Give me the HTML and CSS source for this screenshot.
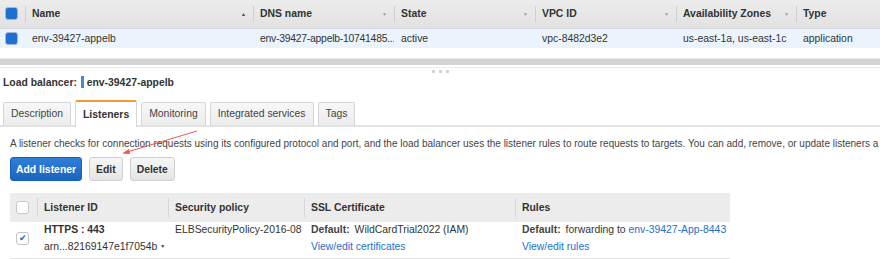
FILE: index.html
```html
<!DOCTYPE html>
<html lang="en">
<head>
  <meta charset="UTF-8">
  <title>Load balancers</title>
  <link rel="stylesheet" href="styles.css">
</head>
<body>
  <table class="lb-table">
    <thead>
      <tr>
        <th class="col-check"><span class="box box-blue"></span></th>
        <th class="col-name">Name<span class="sort up">&#9650;</span></th>
        <th class="col-dns">DNS name<span class="sort">&#9660;</span></th>
        <th class="col-state">State<span class="sort">&#9660;</span></th>
        <th class="col-vpc">VPC ID<span class="sort">&#9660;</span></th>
        <th class="col-az">Availability Zones<span class="sort">&#9660;</span></th>
        <th class="col-type">Type</th>
      </tr>
    </thead>
    <tbody>
      <tr class="selected">
        <td class="col-check"><span class="box box-blue"></span></td>
        <td>env-39427-appelb</td>
        <td class="dns">env-39427-appelb-10741485...</td>
        <td>active</td>
        <td>vpc-8482d3e2</td>
        <td>us-east-1a, us-east-1c</td>
        <td>application</td>
      </tr>
    </tbody>
  </table>

  <div class="splitter">
    <div class="split-bar"></div>
    <div class="split-dots"><i></i><i></i><i></i></div>
  </div>

  <div class="details">
    <div class="lb-title">Load balancer: <span class="marker"></span> env-39427-appelb</div>

    <div class="tabs">
      <div class="tab">Description</div>
      <div class="tab active">Listeners</div>
      <div class="tab">Monitoring</div>
      <div class="tab">Integrated services</div>
      <div class="tab">Tags</div>
    </div>

    <p class="intro">A listener checks for connection requests using its configured protocol and port, and the load balancer uses the listener rules to route requests to targets. You can add, remove, or update listeners a</p>

    <div class="actions">
      <button class="btn btn-primary">Add listener</button>
      <button class="btn">Edit</button>
      <button class="btn">Delete</button>
    </div>

    <table class="listeners">
      <thead>
        <tr>
          <th class="l-check"><span class="box"></span></th>
          <th class="l-id">Listener ID</th>
          <th class="l-policy">Security policy</th>
          <th class="l-cert">SSL Certificate</th>
          <th class="l-rules">Rules</th>
        </tr>
      </thead>
      <tbody>
        <tr>
          <td class="l-check"><span class="box checked">&#10004;</span></td>
          <td>
            <div class="strong">HTTPS : 443</div>
            <div class="sub">arn...82169147e1f7054b <span class="caret">&#9660;</span></div>
          </td>
          <td>ELBSecurityPolicy-2016-08</td>
          <td>
            <div><span class="label">Default:</span> WildCardTrial2022 (IAM)</div>
            <div class="sub"><a href="#">View/edit certificates</a></div>
          </td>
          <td>
            <div><span class="label">Default:</span> forwarding to <a href="#">env-39427-App-8443</a></div>
            <div class="sub"><a href="#">View/edit rules</a></div>
          </td>
        </tr>
      </tbody>
    </table>

    <svg class="arrow" width="90" height="30" viewBox="0 0 90 30">
      <line x1="84" y1="2" x2="14" y2="23" stroke="#f0564e" stroke-width="1"/>
      <polygon points="9,24.5 16,20 17,25" fill="#f0564e"/>
    </svg>
  </div>
</body>
</html>
```

FILE: styles.css
```css
* {
  margin: 0;
  padding: 0;
  box-sizing: border-box;
}

body {
  font-family: "Liberation Sans", Arial, sans-serif;
  font-size: 10.4px;
  color: #333;
  background-color: white;
  width: 880px;
  height: 259px;
  overflow: hidden;
}

table {
  border-collapse: collapse;
  table-layout: fixed;
}

/* top load balancer list */
.lb-table {
  width: 880px;
}

.lb-table th {
  height: 28px;
  text-align: left;
  font-weight: bold;
  color: #333;
  background: linear-gradient(#ececec, #e2e2e2);
  border-bottom: 1px solid #d6d6d6;
  padding-left: 7px;
  position: relative;
}

.lb-table th + th::before {
  content: "";
  position: absolute;
  left: 0;
  top: 6px;
  bottom: 6px;
  border-left: 1px solid #cfcfcf;
}

.lb-table td {
  height: 20px;
  padding-left: 7px;
  white-space: nowrap;
  overflow: hidden;
}

.lb-table td.dns {
  letter-spacing: -0.25px;
  padding-right: 0;
}

.selected td {
  background-color: #ebf3fc;
}

.col-check { width: 25px; }
.col-name { width: 228px; }
.col-dns { width: 141px; }
.col-state { width: 141px; }
.col-vpc { width: 141px; }
.col-az { width: 120px; }

.lb-table .col-check {
  padding-left: 5px;
}

.sort {
  float: right;
  margin-right: 7px;
  font-size: 5px;
  color: #a0a0a0;
  line-height: 12px;
}

.sort.up {
  color: #444;
}

.box {
  display: inline-block;
  width: 13px;
  height: 13px;
  border-radius: 3px;
  border: 1px solid #c8c8c8;
  background-color: white;
  vertical-align: middle;
  text-align: center;
  font-size: 9px;
  line-height: 11px;
}

.box-blue {
  background-color: #1f6fd0;
  border-color: #9fb7d8;
}

.checked {
  color: #1a66c9;
  border-color: #c4c4c4;
}

/* splitter */
.splitter {
  height: 28px;
  padding-top: 10px;
}

.split-bar {
  height: 7px;
  background-color: #d4d4d4;
  border-top: 1px solid #e8e8e8;
}

.split-dots {
  border-top: 1px solid #ececec;
  margin-top: 2px;
  display: flex;
  justify-content: center;
  gap: 4px;
  padding-top: 2px;
}

.split-dots i {
  width: 3px;
  height: 3px;
  background-color: #d0d0d0;
  border-radius: 1px;
}

/* details pane */
.details {
  position: relative;
}

.lb-title {
  font-weight: bold;
  padding-left: 3px;
  color: #333;
  height: 24px;
  line-height: 13px;
}

.marker {
  display: inline-block;
  width: 3px;
  height: 12px;
  background-color: #3c8be0;
  vertical-align: -2px;
  margin-left: 1px;
}

.tabs {
  display: flex;
  gap: 4px;
  padding-left: 3px;
  border-bottom: 2px solid #e2e2e2;
  height: 27px;
  align-items: flex-end;
}

.tab {
  height: 23px;
  padding: 0 7px;
  line-height: 22px;
  color: #444;
  background: linear-gradient(#f7f7f7, #ececec);
  border: 1px solid #d6d6d6;
  border-bottom: none;
  border-radius: 2px 2px 0 0;
}

.tab.active {
  height: 27px;
  line-height: 25px;
  background: white;
  font-weight: bold;
  color: #333;
  border-top: 2px solid #f2993a;
  margin-bottom: -2px;
}

.intro {
  padding: 10px 0 0 10px;
  font-size: 10px;
  line-height: 13px;
  white-space: nowrap;
  color: #444;
  height: 30px;
}

.actions {
  display: flex;
  gap: 7px;
  padding-left: 10px;
  height: 36px;
}

.btn {
  font-family: "Liberation Sans", Arial, sans-serif;
  font-size: 10.4px;
  font-weight: bold;
  height: 24px;
  padding: 0 5px;
  color: #333;
  background: linear-gradient(#f6f6f6, #e4e4e4);
  border: 1px solid #cfcfcf;
  border-radius: 3px;
}

.btn + .btn {
  padding: 0 6px;
}

.btn-primary {
  color: white;
  background: linear-gradient(#2f7fd8, #1b63c0);
  border-color: #1a5fb4;
}

/* listeners table */
.listeners {
  width: 720px;
  margin-left: 10px;
}

.listeners th {
  height: 29px;
  text-align: left;
  font-weight: bold;
  color: #333;
  background-color: #ececec;
  padding-left: 7px;
  position: relative;
}

.listeners th + th::before {
  content: "";
  position: absolute;
  left: 0;
  top: 5px;
  bottom: 5px;
  border-left: 1px solid #d6d6d6;
}

.listeners td {
  padding: 1px 0 5px 7px;
  vertical-align: top;
  line-height: 13px;
  border-bottom: 1px solid #e4e4e4;
  white-space: nowrap;
}

.l-check { width: 27px; }
.l-id { width: 131px; }
.l-policy { width: 136px; }
.l-cert { width: 211px; }

.listeners .l-check {
  padding-left: 6px;
}

.listeners td.l-check {
  vertical-align: middle;
}

.strong {
  font-weight: bold;
}

.sub {
  margin-top: 4px;
}

.caret {
  font-size: 5px;
  vertical-align: 2px;
}

.label {
  font-weight: bold;
  color: #444;
  margin-right: 2px;
}

a {
  color: #1e6fc9;
  text-decoration: none;
}

.arrow {
  position: absolute;
  left: 113px;
  top: 53px;
}
```
